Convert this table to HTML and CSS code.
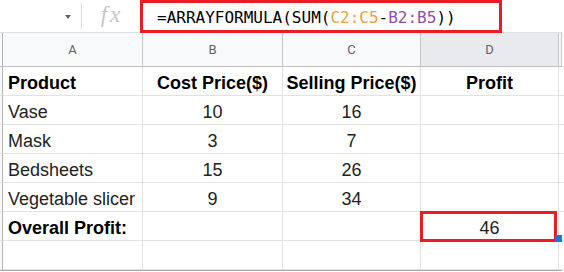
FILE: index.html
```html
<!DOCTYPE html>
<html>
<head>
<meta charset="utf-8">
<link rel="stylesheet" href="styles.css">
</head>
<body>
<div class="formula-bar">
  <div class="namebox"><span class="caret"></span></div>
  <div class="sep"></div>
  <div class="fx">fx</div>
  <div class="formula">=ARRAYFORMULA(SUM(<span class="ref-c">C2:C5</span>-<span class="ref-b">B2:B5</span>))</div>
</div>
<div class="sheet">
  <div class="hc corner"></div>
  <div class="hc">A</div>
  <div class="hc">B</div>
  <div class="hc">C</div>
  <div class="hc sel">D</div>
  <div class="hc edge"></div>

  <div class="rh"></div>
  <div class="c bold">Product</div>
  <div class="c bold mid">Cost Price($)</div>
  <div class="c bold mid">Selling Price($)</div>
  <div class="c bold mid">Profit</div>
  <div class="c edge"></div>

  <div class="rh"></div>
  <div class="c">Vase</div>
  <div class="c mid">10</div>
  <div class="c mid">16</div>
  <div class="c mid"></div>
  <div class="c edge"></div>

  <div class="rh"></div>
  <div class="c">Mask</div>
  <div class="c mid">3</div>
  <div class="c mid">7</div>
  <div class="c mid"></div>
  <div class="c edge"></div>

  <div class="rh"></div>
  <div class="c">Bedsheets</div>
  <div class="c mid">15</div>
  <div class="c mid">26</div>
  <div class="c mid"></div>
  <div class="c edge"></div>

  <div class="rh"></div>
  <div class="c">Vegetable slicer</div>
  <div class="c mid">9</div>
  <div class="c mid">34</div>
  <div class="c mid"></div>
  <div class="c edge"></div>

  <div class="rh"></div>
  <div class="c bold">Overall Profit:</div>
  <div class="c mid"></div>
  <div class="c mid"></div>
  <div class="c mid active">46<span class="highlight"></span><span class="handle"></span></div>
  <div class="c edge"></div>

  <div class="rh"></div>
  <div class="c"></div>
  <div class="c mid"></div>
  <div class="c mid"></div>
  <div class="c mid"></div>
  <div class="c edge"></div>
</div>
</body>
</html>
```
FILE: styles.css
```css
html, body {
  margin: 0;
  padding: 0;
  background: #ffffff;
}
body {
  width: 564px;
  height: 272px;
  overflow: hidden;
  font-family: "Liberation Sans", Arial, sans-serif;
}
.formula-bar {
  display: flex;
  height: 33px;
  box-sizing: border-box;
  border-bottom: 1px solid #e0e0e0;
  width: 562px;
}
.namebox {
  width: 81px;
  position: relative;
  display: flex;
  align-items: center;
  justify-content: flex-end;
  padding-right: 10px;
  box-sizing: border-box;
}
.caret {
  width: 0;
  height: 0;
  border-left: 3.5px solid transparent;
  border-right: 3.5px solid transparent;
  border-top: 4px solid #5f6368;
  margin-top: 2px;
}
.sep {
  width: 1px;
  height: 26px;
  margin-top: 3px;
  background: #dadce0;
}
.fx {
  width: 58px;
  text-align: center;
  font-family: "Liberation Serif", "Times New Roman", serif;
  font-style: italic;
  font-size: 23px;
  letter-spacing: 3px;
  color: #c4c6c8;
  line-height: 30px;
  padding-left: 2px;
  box-sizing: border-box;
}
.formula {
  width: 362px;
  height: 33px;
  box-sizing: border-box;
  border: 3px solid #ea1c24;
  position: relative;
  z-index: 2;
  padding: 6px 0 0 14px;
  font-family: "DejaVu Sans Mono", monospace;
  font-size: 16px;
  line-height: 18px;
  color: #000000;
  white-space: nowrap;
}
.ref-c { color: #f39c3c; }
.ref-b { color: #8e51ab; }

.sheet {
  display: grid;
  grid-template-columns: 3px 140px 140px 138px 138px 3px;
  grid-template-rows: 34px repeat(7, 29px);
  width: 562px;
  border-bottom: 1px solid #a8a8a8;
}
.sheet > div {
  box-sizing: border-box;
  border-right: 1px solid #e2e2e2;
  border-bottom: 1px solid #e2e2e2;
}
.hc {
  background: #f8f9fa;
  border-right-color: #c6c6c6 !important;
  border-bottom-color: #c0c0c0 !important;
  display: flex;
  align-items: center;
  justify-content: center;
  font-family: Roboto, "Liberation Sans", sans-serif;
  font-size: 13px;
  color: #5f6368;
}
.hc.sel {
  background: #e8eaed;
}
.hc.corner, .rh {
  background: #f8f9fa;
  border-right-color: #b4b4b4 !important;
}
.sheet > .edge {
  border-right-color: #9a9a9a;
}
.c {
  display: flex;
  align-items: flex-end;
  padding: 0 5px 2px;
  font-size: 18px;
  line-height: 20px;
  color: #222222;
  white-space: nowrap;
  overflow: visible;
}
.c.mid {
  justify-content: center;
}
.c.bold {
  font-weight: bold;
  color: #000000;
}
.active {
  position: relative;
}
.highlight {
  position: absolute;
  left: -1px;
  top: -1px;
  width: 137px;
  height: 31px;
  box-sizing: border-box;
  border: 3px solid #ea1c24;
  z-index: 2;
}
.handle {
  position: absolute;
  left: 134px;
  top: 23px;
  width: 7px;
  height: 7px;
  background: #1a73e8;
  z-index: 3;
}
```
